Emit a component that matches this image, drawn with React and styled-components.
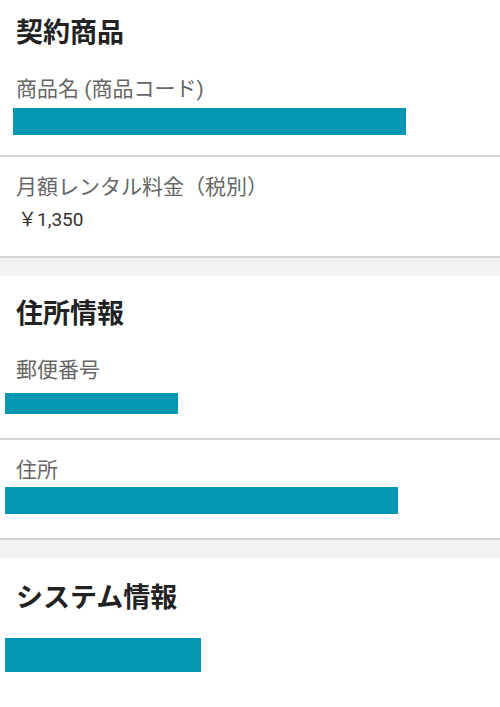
import React from "react";
import styled, { createGlobalStyle } from "styled-components";

const GlobalStyle = createGlobalStyle`
  html, body {
    margin: 0;
    padding: 0;
    background: #ffffff;
  }
  body {
    font-family: Roboto, "Noto Sans CJK JP", sans-serif;
  }
`;

const Page = styled.div`
  width: 500px;
  min-height: 707px;
  background: #ffffff;
  overflow: hidden;
`;

const Section = styled.section`
  padding-top: ${(p) => p.$top}px;
  background: #ffffff;
`;

const SectionTitle = styled.h2`
  margin: 0 0 8px;
  padding: 0 16px;
  font-size: 27px;
  line-height: 36px;
  font-weight: 700;
  color: #222222;
`;

const Item = styled.div`
  padding: 16px 0 20px;
  border-bottom: 2px solid #d4d4d4;
`;

const Label = styled.div`
  padding: 0 16px;
  font-size: 21px;
  line-height: 28px;
  color: #666666;
`;

const Value = styled.div`
  margin: 6px 0 3px;
  padding: 0 18px;
  font-size: 19px;
  line-height: 26px;
  color: #333333;
`;

const Redact = styled.div`
  width: ${(p) => p.$w}px;
  height: ${(p) => p.$h}px;
  margin: ${(p) => p.$mt}px 0 ${(p) => p.$mb || 0}px ${(p) => p.$x}px;
  background: #0296b1;
`;

const Gap = styled.div`
  height: 18px;
  background: #f2f2f2;
`;

function App() {
  return (
    <Page>
      <GlobalStyle />
      <Section $top={15}>
        <SectionTitle>契約商品</SectionTitle>
        <Item>
          <Label>商品名 (商品コード)</Label>
          <Redact $w={393} $h={27} $x={13} $mt={5} />
        </Item>
        <Item>
          <Label>月額レンタル料金（税別）</Label>
          <Value>￥1,350</Value>
        </Item>
      </Section>
      <Gap />
      <Section $top={20}>
        <SectionTitle>住所情報</SectionTitle>
        <Item>
          <Label>郵便番号</Label>
          <Redact $w={173} $h={21} $x={5} $mt={9} $mb={4} />
        </Item>
        <Item>
          <Label>住所</Label>
          <Redact $w={393} $h={27} $x={5} $mt={3} $mb={4} />
        </Item>
      </Section>
      <Gap />
      <Section $top={22}>
        <SectionTitle>システム情報</SectionTitle>
        <Redact $w={196} $h={34} $x={5} $mt={22} />
      </Section>
    </Page>
  );
}

export default App;
